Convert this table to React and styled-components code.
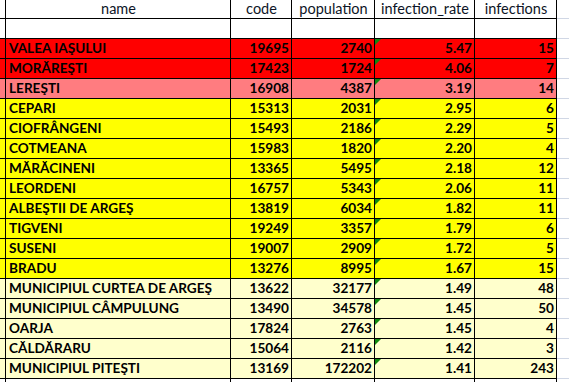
import React from "react";
import styled, { createGlobalStyle } from "styled-components";

const GlobalStyle = createGlobalStyle`
	html, body {
		margin: 0;
		padding: 0;
		background: #ffffff;
		overflow: hidden;
	}
	body {
		font-family: "Lato", "Liberation Sans", sans-serif;
	}
`;

const fills = {
	red: "#ff0000",
	pink: "#ff7c80",
	yellow: "#ffff00",
	cream: "#ffffcc",
	none: "#ffffff",
};

const columns = [
	{ key: "edge", width: 6 },
	{ key: "name", width: 225, align: "left" },
	{ key: "code", width: 61 },
	{ key: "population", width: 83 },
	{ key: "infection_rate", width: 100, flag: true },
	{ key: "infections", width: 82 },
];

const rows = [
	["VALEA IAŞULUI", 19695, 2740, "5.47", 15, "red"],
	["MORĂREŞTI", 17423, 1724, "4.06", 7, "red"],
	["LEREŞTI", 16908, 4387, "3.19", 14, "pink"],
	["CEPARI", 15313, 2031, "2.95", 6, "yellow"],
	["CIOFRÂNGENI", 15493, 2186, "2.29", 5, "yellow"],
	["COTMEANA", 15983, 1820, "2.20", 4, "yellow"],
	["MĂRĂCINENI", 13365, 5495, "2.18", 12, "yellow"],
	["LEORDENI", 16757, 5343, "2.06", 11, "yellow"],
	["ALBEŞTII DE ARGEŞ", 13819, 6034, "1.82", 11, "yellow"],
	["TIGVENI", 19249, 3357, "1.79", 6, "yellow"],
	["SUSENI", 19007, 2909, "1.72", 5, "yellow"],
	["BRADU", 13276, 8995, "1.67", 15, "yellow"],
	["MUNICIPIUL CURTEA DE ARGEŞ", 13622, 32177, "1.49", 48, "cream"],
	["MUNICIPIUL CÂMPULUNG", 13490, 34578, "1.45", 50, "cream"],
	["OARJA", 17824, 2763, "1.45", 4, "cream"],
	["CĂLDĂRARU", 15064, 2116, "1.42", 3, "cream"],
	["MUNICIPIUL PITEŞTI", 13169, 172202, "1.41", 243, "cream"],
];

const Sheet = styled.div`
	display: flex;
	flex-direction: column;
	width: 569px;
	height: 382px;
	overflow: hidden;
`;

const Row = styled.div`
	display: flex;
	flex-shrink: 0;
	height: ${(p) => p.$height}px;
	background: ${(p) => fills[p.$fill]};
`;

const Cell = styled.div`
	position: relative;
	box-sizing: border-box;
	flex-shrink: 0;
	width: ${(p) => p.$width}px;
	display: flex;
	align-items: center;
	justify-content: ${(p) =>
		p.$align === "center" ? "center" : p.$align === "left" ? "flex-start" : "flex-end"};
	padding: 0 2px 0 3px;
	border-right: 1px solid #000;
	border-bottom: 1px solid #000;
	font-size: ${(p) => (p.$head ? "14.5px" : "13.6px")};
	font-weight: ${(p) => (p.$head ? 400 : 700)};
	color: ${(p) => (p.$head ? "#0d1526" : "#000")};
	white-space: nowrap;
	overflow: hidden;
	line-height: 1;
`;

const Flag = styled.span`
	position: absolute;
	top: 0;
	left: 0;
	width: 0;
	height: 0;
	border-top: 6px solid #108a10;
	border-right: 6px solid transparent;
`;

const Spare = styled.div`
	flex: 1;
	box-sizing: border-box;
	border-bottom: 1px solid #d0d7e5;
	background: #ffffff;
`;

const SheetRow = ({ cells, fill, height, head, flagged }) => (
	<Row $fill={fill} $height={height}>
		{columns.map((col, i) => (
			<Cell
				key={col.key}
				$width={col.width}
				$align={head ? "center" : col.align}
				$head={head}
			>
				{flagged && col.flag && <Flag />}
				{cells[i]}
			</Cell>
		))}
		<Spare />
	</Row>
);

const App = () => {
	return (
		<>
			<GlobalStyle />
			<Sheet>
				<SheetRow
					head
					height={19}
					fill="none"
					cells={["", "name", "code", "population", "infection_rate", "infections"]}
				/>
				<SheetRow head height={20} fill="none" cells={["", "", "", "", "", ""]} />
				{rows.map(([name, code, pop, rate, inf, fill]) => (
					<SheetRow
						key={name}
						height={20}
						fill={fill}
						flagged
						cells={["", name, code, pop, rate, inf]}
					/>
				))}
				<SheetRow height={20} fill="none" cells={["", "", "", "", "", ""]} />
			</Sheet>
		</>
	);
};

export default App;
